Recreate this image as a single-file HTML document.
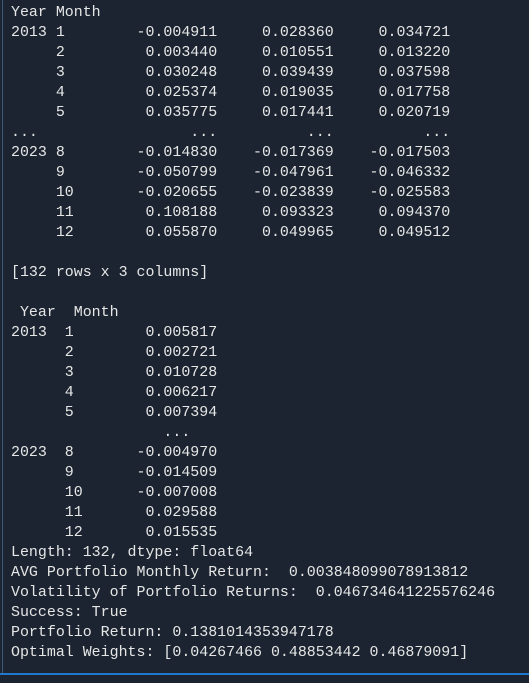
<!DOCTYPE html>
<html><head><meta charset="utf-8"><style>
html,body{margin:0;padding:0;width:529px;height:683px;overflow:hidden;background:#1b2430;}
.wrap{position:absolute;left:0;top:0;width:529px;height:683px;background:#1b2430;}
.lb{position:absolute;left:2px;top:0;width:1px;height:673px;background:#3b5a7a;}
.bb{position:absolute;left:0;top:673px;width:529px;height:2px;background:#1f78cc;}
pre{position:absolute;left:11px;top:3px;margin:0;font-family:"Liberation Mono",monospace;font-size:14.95px;line-height:20px;color:#e6e6e6;}
</style></head><body><div class="wrap"><div class="lb"></div><div class="bb"></div>
<pre>Year Month
2013 1        -0.004911     0.028360     0.034721
     2         0.003440     0.010551     0.013220
     3         0.030248     0.039439     0.037598
     4         0.025374     0.019035     0.017758
     5         0.035775     0.017441     0.020719
...                 ...          ...          ...
2023 8        -0.014830    -0.017369    -0.017503
     9        -0.050799    -0.047961    -0.046332
     10       -0.020655    -0.023839    -0.025583
     11        0.108188     0.093323     0.094370
     12        0.055870     0.049965     0.049512

[132 rows x 3 columns]

 Year  Month
2013  1        0.005817
      2        0.002721
      3        0.010728
      4        0.006217
      5        0.007394
                 ...
2023  8       -0.004970
      9       -0.014509
      10      -0.007008
      11       0.029588
      12       0.015535
Length: 132, dtype: float64
AVG Portfolio Monthly Return:  0.003848099078913812
Volatility of Portfolio Returns:  0.046734641225576246
Success: True
Portfolio Return: 0.1381014353947178
Optimal Weights: [0.04267466 0.48853442 0.46879091]</pre></div></body></html>
